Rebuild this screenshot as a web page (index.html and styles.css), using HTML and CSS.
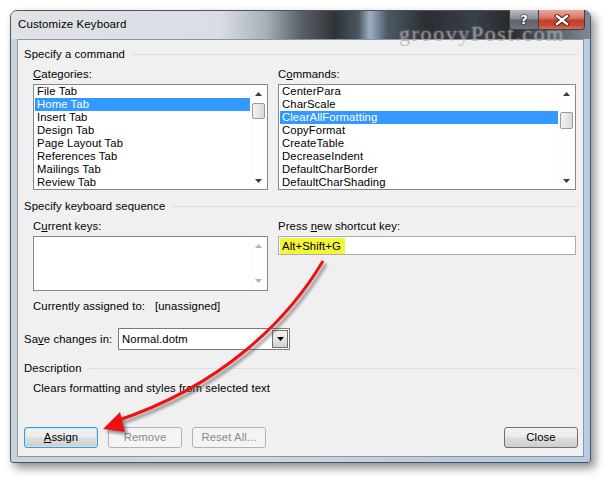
FILE: index.html
```html
<!DOCTYPE html>
<html>
<head>
<meta charset="utf-8">
<link rel="stylesheet" href="styles.css">
</head>
<body>
<div class="desktop">
  <div class="window">
    <div class="titlebar">
      <span class="title">Customize Keyboard</span>
      <div class="caption-btns">
        <div class="cbtn help">?</div>
        <div class="cbtn close">
          <svg width="16" height="12" viewBox="0 0 16 12"><path d="M3 2 L13 10 M13 2 L3 10" stroke="#3a1410" stroke-width="4.2" stroke-linecap="square"/><path d="M3 2 L13 10 M13 2 L3 10" stroke="#fff" stroke-width="2.4" stroke-linecap="square"/></svg>
        </div>
      </div>
    </div>
    <div class="client">
      <div class="group-head"><span>Specify a command</span><i class="rule"></i></div>
      <div class="two-col">
        <div class="col left">
          <div class="label"><u>C</u>ategories:</div>
          <div class="listbox">
            <div class="items">
              <div class="item">File Tab</div>
              <div class="item sel">Home Tab</div>
              <div class="item">Insert Tab</div>
              <div class="item">Design Tab</div>
              <div class="item">Page Layout Tab</div>
              <div class="item">References Tab</div>
              <div class="item">Mailings Tab</div>
              <div class="item">Review Tab</div>
            </div>
            <div class="vscroll">
              <div class="sbtn"><svg width="7" height="4" viewBox="0 0 7 4"><polygon points="3.5,0 7,4 0,4" fill="#3c3c3c"/></svg></div>
              <div class="track"><div class="thumb t1"></div></div>
              <div class="sbtn"><svg width="7" height="4" viewBox="0 0 7 4"><polygon points="0,0 7,0 3.5,4" fill="#3c3c3c"/></svg></div>
            </div>
          </div>
        </div>
        <div class="col right">
          <div class="label">C<u>o</u>mmands:</div>
          <div class="listbox">
            <div class="items">
              <div class="item">CenterPara</div>
              <div class="item">CharScale</div>
              <div class="item sel">ClearAllFormatting</div>
              <div class="item">CopyFormat</div>
              <div class="item">CreateTable</div>
              <div class="item">DecreaseIndent</div>
              <div class="item">DefaultCharBorder</div>
              <div class="item">DefaultCharShading</div>
            </div>
            <div class="vscroll">
              <div class="sbtn"><svg width="7" height="4" viewBox="0 0 7 4"><polygon points="3.5,0 7,4 0,4" fill="#3c3c3c"/></svg></div>
              <div class="track"><div class="thumb t2"></div></div>
              <div class="sbtn"><svg width="7" height="4" viewBox="0 0 7 4"><polygon points="0,0 7,0 3.5,4" fill="#3c3c3c"/></svg></div>
            </div>
          </div>
        </div>
      </div>

      <div class="group-head g2"><span>Specify keyboard sequence</span><i class="rule"></i></div>
      <div class="two-col">
        <div class="col left">
          <div class="label">C<u>u</u>rrent keys:</div>
          <div class="listbox keys">
            <div class="items"></div>
            <div class="vscroll off">
              <div class="sbtn"><svg width="7" height="4" viewBox="0 0 7 4"><polygon points="3.5,0 7,4 0,4" fill="#b4b4b4"/></svg></div>
              <div class="track"></div>
              <div class="sbtn"><svg width="7" height="4" viewBox="0 0 7 4"><polygon points="0,0 7,0 3.5,4" fill="#b4b4b4"/></svg></div>
            </div>
          </div>
        </div>
        <div class="col right">
          <div class="label">Press <u>n</u>ew shortcut key:</div>
          <div class="textbox"><span class="hl">Alt+Shift+G</span></div>
        </div>
      </div>
      <div class="assigned"><span class="a-label">Currently assigned to:</span><span>[unassigned]</span></div>

      <div class="save-row">
        <span class="save-label">Sa<u>v</u>e changes in:</span>
        <div class="select">
          <span class="sel-text">Normal.dotm</span>
          <div class="dd"><svg width="7" height="4" viewBox="0 0 7 4"><polygon points="0,0 7,0 3.5,4" fill="#000"/></svg></div>
        </div>
      </div>

      <div class="group-head g3"><span>Description</span><i class="rule"></i></div>
      <div class="desc">Clears formatting and styles from selected text</div>

      <div class="buttons">
        <div class="btn focus"><u>A</u>ssign</div>
        <div class="btn disabled">Remove</div>
        <div class="btn disabled">Reset All...</div>
        <div class="spacer"></div>
        <div class="btn">Close</div>
      </div>
    </div>
  </div>
  <div class="watermark">groovyPost.com</div>
  <svg class="arrow" width="609" height="482" viewBox="0 0 609 482">
    <defs>
      <filter id="blur" x="-20%" y="-20%" width="140%" height="140%"><feGaussianBlur stdDeviation="1.6"/></filter>
    </defs>
    <g transform="translate(3,3)" filter="url(#blur)" opacity="0.55">
      <path d="M323 261 C 288 320 222 386 116 421" fill="none" stroke="#444" stroke-width="3"/>
      <polygon points="103,429 120,412 125,432" fill="#444"/>
    </g>
    <path d="M323 261 C 288 320 222 386 116 421" fill="none" stroke="#ee1111" stroke-width="3"/>
    <polygon points="103,429 120,412 125,432" fill="#ee1111"/>
  </svg>
</div>
</body>
</html>
```

FILE: styles.css
```css
* { box-sizing: border-box; }
html, body { margin: 0; padding: 0; background: #ffffff; }
body {
  font-family: "Liberation Sans", Arial, sans-serif;
  font-size: 11.3px;
  letter-spacing: 0.1px;
  color: #000;
}
.desktop {
  position: relative;
  width: 609px;
  height: 482px;
  padding: 10px 0 0 10px;
  overflow: hidden;
}
.window {
  width: 581px;
  height: 453px;
  border: 1px solid #4a5560;
  border-radius: 7px 7px 3px 3px;
  padding: 0 6px 5px 6px;
  display: flex;
  flex-direction: column;
  background: linear-gradient(90deg, #c9d3dc 0%, #cfd8e0 40%, #bccbdb 75%, #b5cce4 100%);
  box-shadow: 4px 5px 10px rgba(0,0,0,0.45);
}
.titlebar {
  flex: none;
  height: 28px;
  margin: 0 -6px;
  padding: 0 5px 0 7px;
  display: flex;
  align-items: flex-start;
  border-radius: 6px 6px 0 0;
  background-color: #d8dde3;
  background-image: linear-gradient(90deg, #dfe3e8 0%, #d9dee4 36%, #a9b0b8 44%, #5b6168 50%, #2f3338 56%, #4c5660 60%, #9cb0c4 62%, #4e5864 65%, #2a2e33 72%, #3a4048 80%, #262a2e 86%, #4a525a 92%, #7f8a96 100%);
}
.title {
  flex: 1;
  line-height: 15px;
  padding-top: 6px;
  font-size: 11.5px;
  color: #000;
}
.caption-btns {
  display: flex;
  margin-top: -1px;
}
.cbtn {
  height: 20px;
  border: 1px solid #3c4046;
  border-top: 0;
  display: flex;
  align-items: center;
  justify-content: center;
}
.help {
  width: 29px;
  border-radius: 0 0 0 4px;
  border-right: 0;
  background: linear-gradient(180deg, #b8bdc3 0%, #8a9097 45%, #5d636a 55%, #6e757c 100%);
  color: #fff;
  font-weight: bold;
  font-size: 13px;
  text-shadow: 0 0 2px #000, 0 0 1px #000;
  font-family: "DejaVu Sans", sans-serif;
}
.close {
  width: 47px;
  border-radius: 0 0 4px 0;
  background: linear-gradient(180deg, #e9a99e 0%, #d9786a 40%, #c2402c 55%, #c74a36 80%, #d66e5d 100%);
}
.client {
  flex: 1;
  background: #f0f0f0;
  border: 1px solid #8795a4;
  padding: 7px 5px 0 6px;
  display: flex;
  flex-direction: column;
}
.group-head {
  display: flex;
  align-items: center;
  height: 15px;
  line-height: 15px;
}
.group-head .rule {
  flex: 1;
  height: 1px;
  background: #d5dfe5;
  margin-left: 7px;
}
.group-head.g2 { margin-top: 9px; }
.group-head.g3 { margin-top: 11px; }
.two-col {
  display: flex;
  gap: 10px;
  padding-left: 9px;
  margin-top: 5px;
}
.col.left { width: 235px; }
.col.right { width: 298px; }
.label {
  height: 15px;
  line-height: 15px;
  margin-bottom: 2px;
}
.listbox {
  height: 106px;
  border: 1px solid #828790;
  background: #fff;
  display: flex;
}
.listbox .items {
  flex: 1;
  padding: 0 0 0 1px;
}
.item {
  height: 13px;
  line-height: 13px;
  padding-left: 2px;
  white-space: nowrap;
}
.item.sel {
  background: #3399ff;
  color: #fff;
}
.vscroll {
  width: 17px;
  display: flex;
  flex-direction: column;
  background: #fdfdfd;
}
.sbtn {
  height: 17px;
  display: flex;
  align-items: center;
  justify-content: center;
}
.track { flex: 1; }
.thumb {
  width: 13px;
  margin-left: 2px;
  border: 1px solid #9a9a9a;
  border-radius: 2px;
  background: linear-gradient(90deg, #f3f3f3, #e6e6e6 50%, #d8d8d8);
}
.thumb.t1 { margin-top: 1px; height: 16px; }
.thumb.t2 { margin-top: 10px; height: 17px; }
.listbox.keys { height: 55px; }
.vscroll.off .sbtn { height: 18px; }
.textbox {
  height: 19px;
  border: 1px solid #abadb3;
  background: #fff;
  padding: 1px 0 0 1px;
}
.hl {
  display: inline-block;
  background: #f5f53a;
  height: 16px;
  line-height: 16px;
  padding: 0 4px 0 2px;
}
.assigned {
  margin-top: 8px;
  padding-left: 9px;
  height: 15px;
  line-height: 15px;
  display: flex;
  white-space: nowrap;
}
.a-label { width: 122px; flex: none; }
.save-row {
  margin-top: 14px;
  display: flex;
  align-items: center;
  height: 22px;
  white-space: nowrap;
}
.save-label { width: 94px; flex: none; }
.select {
  width: 172px;
  height: 22px;
  border: 1px solid #7a7a7a;
  background: #fff;
  display: flex;
  align-items: center;
  padding: 1px;
}
.sel-text { flex: 1; padding-left: 2px; }
.dd {
  width: 16px;
  height: 18px;
  border: 1px solid #707070;
  background: linear-gradient(180deg, #f2f2f2, #e4e4e4 50%, #d2d2d2);
  display: flex;
  align-items: center;
  justify-content: center;
}
.desc {
  margin-top: 5px;
  padding-left: 9px;
  height: 15px;
  line-height: 15px;
}
.buttons {
  margin-top: 31px;
  display: flex;
  gap: 10px;
}
.spacer { flex: 1; }
.btn {
  width: 74px;
  height: 21px;
  border: 1px solid #707070;
  border-radius: 3px;
  background: linear-gradient(180deg, #f2f2f2 0%, #ebebeb 48%, #dddddd 52%, #cfcfcf 100%);
  display: flex;
  align-items: center;
  justify-content: center;
  line-height: 15px;
}
.btn.focus {
  border-color: #3c9ad6;
  box-shadow: inset 0 0 0 1px #c8e6f8;
}
.btn.disabled {
  border-color: #adb2b5;
  background: #f4f4f4;
  color: #8a8a8a;
}
.watermark {
  position: absolute;
  left: 399px;
  top: 22px;
  line-height: 24px;
  font-family: "Liberation Serif", serif;
  font-size: 22px;
  letter-spacing: 1.6px;
  color: rgba(150,150,150,0.6);
  text-shadow: 0 0 2px rgba(255,255,255,0.5);
}
.arrow {
  position: absolute;
  left: 0;
  top: 0;
  pointer-events: none;
}
```
